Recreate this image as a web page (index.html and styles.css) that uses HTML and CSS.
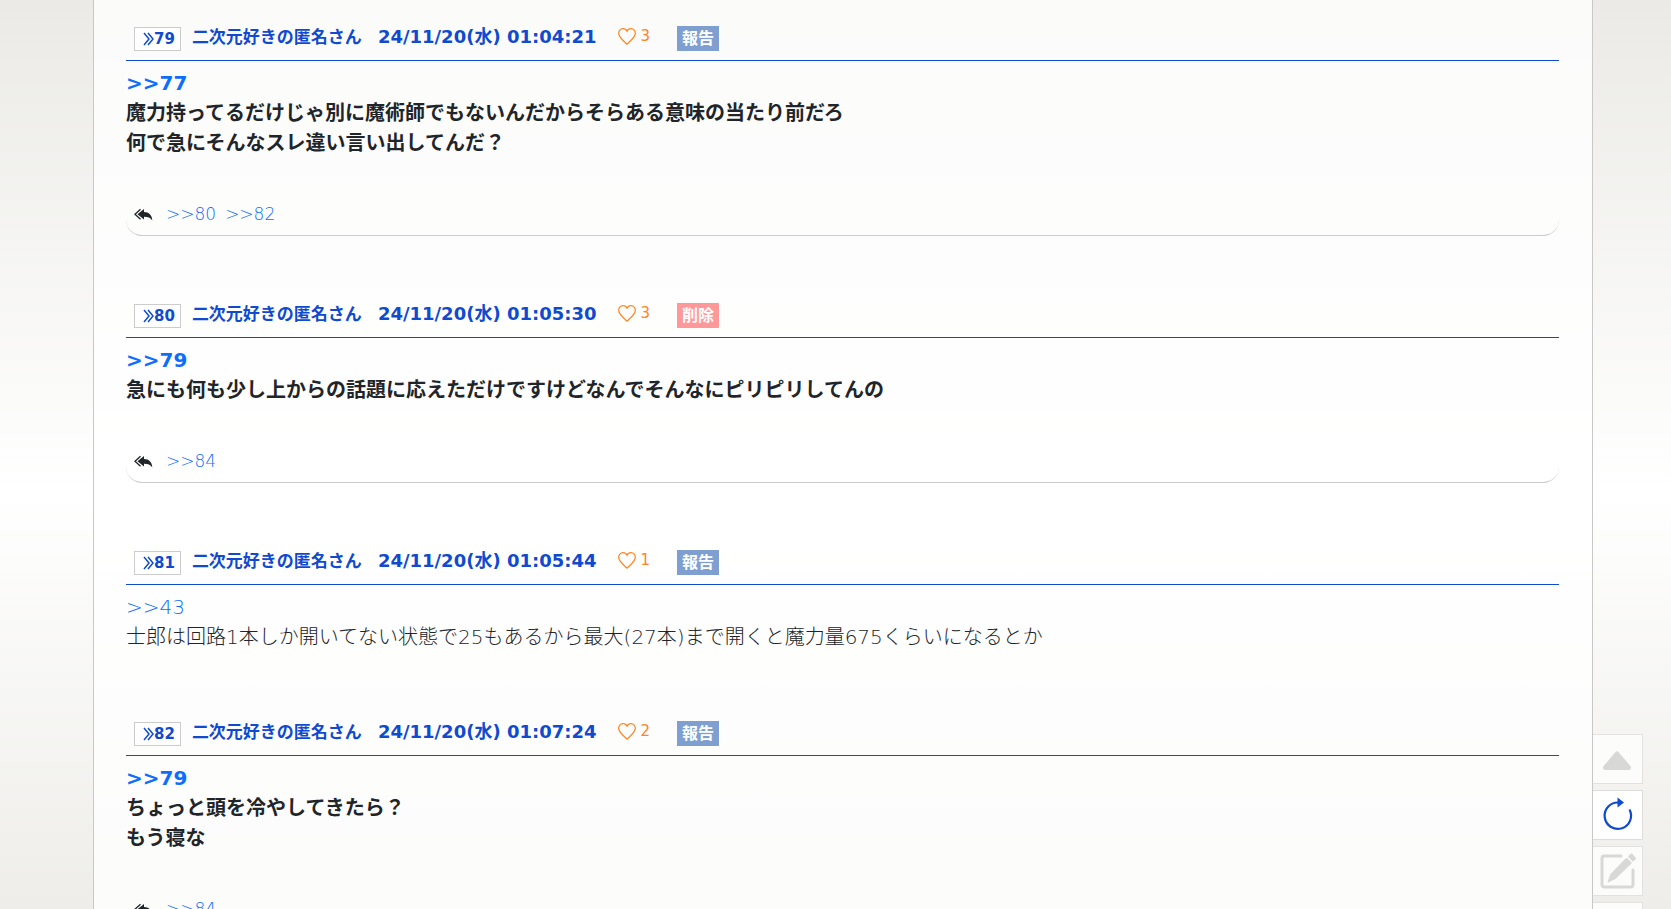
FILE: index.html
```html
<!DOCTYPE html>
<html lang="ja">
<head>
    <meta charset="UTF-8">
    <meta name="viewport" content="width=device-width, initial-scale=1.0">
    <title>スレッド</title>
    <link rel="stylesheet" href="styles.css">
</head>
<body>
    <!-- Shared icons -->
    <svg class="sprite" aria-hidden="true">
        <symbol id="anchor" viewBox="0 0 11 14">
            <path d="M1 1l5 6-5 6M5 1l5 6-5 6" fill="none" stroke="currentColor" stroke-width="1.500"/>
        </symbol>
        <symbol id="heart" viewBox="0 0 18 17">
            <path d="M9 16.2C6.300 13.200 1 9.700 .7 5.600C.5 2.700 2.500 .7 5 .7C6.900 .7 8.300 1.700 9 3.200C9.700 1.700 11.100 .7 13 .7C15.500 .7 17.500 2.700 17.300 5.600C17 9.700 11.700 13.200 9 16.200Z" fill="none" stroke="currentColor" stroke-width="1.200"/>
        </symbol>
        <symbol id="reply-all" viewBox="0 0 19 13">
            <path d="M10 1v3c5 0 8 3 8.300 8.500C16.500 9.500 14 8.700 10 8.700V11.500L3.500 6.200Z" fill="currentColor"/>
            <path d="M6.500 1.200L1 6.200L6.500 11.200" fill="none" stroke="currentColor" stroke-width="1.300"/>
        </symbol>
    </svg>

    <main class="thread">
        <article class="post">
            <header class="post-header">
                <a class="post-number" href="#79"><svg class="anchor-icon"><use href="#anchor"/></svg>79</a>
                <span class="post-name">二次元好きの匿名さん</span>
                <time class="post-date">24/11/20(水) 01:04:21</time>
                <button class="like" aria-label="いいね"><svg class="heart-icon"><use href="#heart"/></svg>3</button>
                <button class="tag">報告</button>
            </header>
            <div class="post-body strong">
                <a href="#77">&gt;&gt;77</a><br>
                魔力持ってるだけじゃ別に魔術師でもないんだからそらある意味の当たり前だろ<br>
                何で急にそんなスレ違い言い出してんだ？
            </div>
            <footer class="replies">
                <svg class="reply-icon"><use href="#reply-all"/></svg>
                <a href="#80">&gt;&gt;80</a>
                <a href="#82">&gt;&gt;82</a>
            </footer>
        </article>

        <article class="post">
            <header class="post-header">
                <a class="post-number" href="#80"><svg class="anchor-icon"><use href="#anchor"/></svg>80</a>
                <span class="post-name">二次元好きの匿名さん</span>
                <time class="post-date">24/11/20(水) 01:05:30</time>
                <button class="like" aria-label="いいね"><svg class="heart-icon"><use href="#heart"/></svg>3</button>
                <button class="tag delete">削除</button>
            </header>
            <div class="post-body strong">
                <a href="#79">&gt;&gt;79</a><br>
                急にも何も少し上からの話題に応えただけですけどなんでそんなにピリピリしてんの
            </div>
            <footer class="replies">
                <svg class="reply-icon"><use href="#reply-all"/></svg>
                <a href="#84">&gt;&gt;84</a>
            </footer>
        </article>

        <article class="post">
            <header class="post-header">
                <a class="post-number" href="#81"><svg class="anchor-icon"><use href="#anchor"/></svg>81</a>
                <span class="post-name">二次元好きの匿名さん</span>
                <time class="post-date">24/11/20(水) 01:05:44</time>
                <button class="like" aria-label="いいね"><svg class="heart-icon"><use href="#heart"/></svg>1</button>
                <button class="tag">報告</button>
            </header>
            <div class="post-body">
                <a href="#43">&gt;&gt;43</a><br>
                士郎は回路1本しか開いてない状態で25もあるから最大(27本)まで開くと魔力量675くらいになるとか
            </div>
        </article>

        <article class="post">
            <header class="post-header">
                <a class="post-number" href="#82"><svg class="anchor-icon"><use href="#anchor"/></svg>82</a>
                <span class="post-name">二次元好きの匿名さん</span>
                <time class="post-date">24/11/20(水) 01:07:24</time>
                <button class="like" aria-label="いいね"><svg class="heart-icon"><use href="#heart"/></svg>2</button>
                <button class="tag">報告</button>
            </header>
            <div class="post-body strong">
                <a href="#79">&gt;&gt;79</a><br>
                ちょっと頭を冷やしてきたら？<br>
                もう寝な
            </div>
            <footer class="replies">
                <svg class="reply-icon"><use href="#reply-all"/></svg>
                <a href="#84">&gt;&gt;84</a>
            </footer>
        </article>
    </main>

    <!-- Floating buttons -->
    <nav class="side-menu">
        <button class="side-button inactive" aria-label="上へ">
            <svg width="36" height="36" viewBox="0 0 36 36">
                <path d="M17 13L28.500 26.500H5.500Z" fill="currentColor" stroke="currentColor" stroke-width="5" stroke-linejoin="round"/>
            </svg>
        </button>
        <button class="side-button" aria-label="更新">
            <svg width="36" height="36" viewBox="0 0 36 36">
                <path d="M29.500 12.500A13.200 13.200 0 1 1 18 5.500" fill="none" stroke="currentColor" stroke-width="2.200"/>
                <path d="M17.500 .5L24 5.500L17.500 10.500Z" fill="currentColor"/>
            </svg>
        </button>
        <button class="side-button inactive" aria-label="書き込む">
            <svg width="36" height="36" viewBox="0 0 36 36">
                <path d="M21 3H4.500Q2 3 2 5.500V31.500Q2 34 4.500 34H30.500Q33 34 33 31.500V17" fill="none" stroke="currentColor" stroke-width="3" stroke-linecap="round"/>
                <path d="M26.500 5L31.500 10L15.500 25.500L8 29L11 21Z" fill="currentColor" stroke="currentColor" stroke-linejoin="round"/>
                <path d="M29.300 3.500L31.500 1.500L35 5.500L33 7.500Z" fill="currentColor" stroke="currentColor" stroke-width="2" stroke-linejoin="round"/>
            </svg>
        </button>
        <button class="side-button inactive" aria-label="下へ"></button>
    </nav>
</body>
</html>
```
FILE: styles.css
```css
body {
    margin: 0;
    height: 100vh;
    overflow: hidden;
    font-family: "DejaVu Sans", "Noto Sans CJK JP", sans-serif;
    font-size: 20px;
    line-height: 30px;
    color: #212529;
    background: linear-gradient(#ebeae6, #ffffff 54%, #eeede9);
}
a {
    color: #0d6efd;
    text-decoration: none;
}
button {
    margin: 0;
    padding: 0;
    border: none;
    background: none;
    font-family: inherit;
    cursor: pointer;
}
.sprite {
    display: none;
}
.thread {
    margin: 0 78px 0 93px;
    padding: 26px 33px 0 32px;
    background-color: rgba(255, 255, 255, 0.8);
    border-left: 1px solid #c8c8c8;
    border-right: 1px solid #c8c8c8;
}
.post {
    margin-bottom: 28px;
}
.post-header {
    display: flex;
    align-items: flex-start;
    height: 25px;
    padding: 0 8px 9px;
    border-bottom: 1px solid #0f4acf;
    font-size: 18px;
    line-height: 22px;
    font-weight: bold;
    color: #0f4acf;
}
.post-number {
    display: flex;
    align-items: center;
    align-self: flex-end;
    box-sizing: border-box;
    height: 24px;
    padding: 0 5px 0 8px;
    margin-right: 11px;
    border: 1px solid #cccccc;
    background-color: #ffffff;
    color: #0f4acf;
    font-size: 15px;
    line-height: 20px;
}
.anchor-icon {
    width: 11px;
    height: 14px;
}
.post-name {
    margin-right: 16px;
    font-size: 17px;
}
.post-date {
    margin-right: 22px;
}
.like {
    display: flex;
    align-items: center;
    gap: 4px;
    margin-right: 27px;
    color: #ff8522;
    font-size: 15px;
    line-height: 20px;
}
.heart-icon {
    width: 18px;
    height: 17px;
}
.tag {
    height: 25px;
    padding: 0 5px;
    background-color: #7f9fd0;
    color: #ffffff;
    font-size: 16px;
    line-height: 24px;
    font-weight: bold;
}
.tag.delete {
    background-color: #ff9999;
}
.post-body {
    padding: 7px 0 41px;
    font-weight: 300;
}
.post-body.strong {
    font-weight: bold;
}
.replies {
    display: flex;
    align-items: center;
    gap: 9px;
    margin-bottom: 67px;
    padding: 0 8px 6px;
    border-bottom: 1px solid #cccccc;
    border-radius: 0 0 16px 16px;
    font-size: 17px;
    font-weight: 300;
}
.reply-icon {
    width: 19px;
    height: 13px;
    margin-right: 4px;
}
.side-menu {
    position: fixed;
    top: calc(100vh - 175px);
    right: 28px;
    display: flex;
    flex-direction: column;
    gap: 6px;
}
.side-button {
    display: flex;
    align-items: center;
    justify-content: center;
    box-sizing: border-box;
    width: 50px;
    height: 50px;
    border: 1px solid #dddddd;
    border-left: none;
    background-color: #ffffff;
    color: #0f4acf;
}
.side-button.inactive {
    border-color: #e2e2e1;
    background-color: #fcfcfb;
    color: #d8d8d7;
}
```
